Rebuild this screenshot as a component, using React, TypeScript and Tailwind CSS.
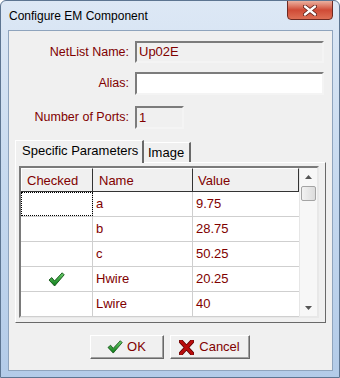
const rows = [
  { checked: false, name: "a", value: "9.75" },
  { checked: false, name: "b", value: "28.75" },
  { checked: false, name: "c", value: "50.25" },
  { checked: true, name: "Hwire", value: "20.25" },
  { checked: false, name: "Lwire", value: "40" },
];

const GreenCheck = ({ w = 17, h = 15 }: { w?: number; h?: number }) => (
  <svg width={w} height={h} viewBox="0 0 17 15">
    <defs>
      <linearGradient id="gck" x1="0" y1="0" x2="0" y2="1">
        <stop offset="0" stopColor="#6fd06f" />
        <stop offset="1" stopColor="#0a7a16" />
      </linearGradient>
    </defs>
    <polygon
      points="1,8 3.8,5.6 6.5,9 14.2,0.8 16.2,2.8 6.6,14"
      fill="url(#gck)"
      stroke="#0d4f12"
      strokeWidth="0.9"
      strokeLinejoin="round"
    />
  </svg>
);

const RedX = () => (
  <svg width="15" height="15" viewBox="0 0 15 15">
    <path d="M2 1.5 L13 13.5 M13 1.5 L2 13.5" stroke="#5a0000" strokeWidth="4.4" strokeLinecap="round" />
    <path d="M2 1.5 L13 13.5 M13 1.5 L2 13.5" stroke="#b80d0d" strokeWidth="3" strokeLinecap="round" />
  </svg>
);

const sunken =
  "border-2 border-t-[#7c7c7c] border-l-[#7c7c7c] border-b-[#f4f4f4] border-r-[#f4f4f4]";

const App = () => {
  return (
    <div className="w-[340px] h-[378px] overflow-hidden bg-gradient-to-b from-[#dde8f5] via-[#c6d9ef] to-[#b3cbe8] border border-[#5d7591] rounded-t-[6px] flex flex-col font-['Liberation_Sans',Arial,sans-serif] text-[13px]">
      {/* Title bar */}
      <div className="h-[29px] shrink-0 relative">
        <span className="absolute left-[8px] top-[7px] leading-[16px] text-[12px] text-black">
          Configure EM Component
        </span>
        <div className="absolute right-[6px] top-[-1px] w-[46px] h-[20px] rounded-b-[4px] border border-[#6e2a22] bg-gradient-to-b from-[#eab0a0] via-[#cf4a36] to-[#dd6f55] flex items-center justify-center">
          <svg width="14" height="11" viewBox="0 0 14 11">
            <path d="M2 1.5 L12 9.5 M12 1.5 L2 9.5" stroke="#5b1d17" strokeWidth="4" strokeLinecap="round" />
            <path d="M2 1.5 L12 9.5 M12 1.5 L2 9.5" stroke="#ffffff" strokeWidth="2.4" strokeLinecap="round" />
          </svg>
        </div>
      </div>

      {/* Client area */}
      <div className="ml-[7px] mr-[6px] mb-[6px] flex-1 bg-[#f0f0f0] border border-[#8fa4bd] flex flex-col text-[#800000]">
        {/* NetList Name */}
        <div className="flex items-center mt-[10px]">
          <label className="w-[120px] text-right text-[12.5px]">NetList Name:</label>
          <div className={`ml-[6px] w-[189px] h-[22px] bg-[#f0f0f0] ${sunken} px-[2px] leading-[18px]`}>
            Up02E
          </div>
        </div>

        {/* Alias */}
        <div className="flex items-center mt-[9px]">
          <label className="w-[120px] text-right text-[12.5px]">Alias:</label>
          <input
            className={`ml-[6px] w-[189px] h-[23px] bg-white ${sunken} px-[2px] outline-none`}
            type="text"
          />
        </div>

        {/* Number of Ports */}
        <div className="flex items-center mt-[11px]">
          <label className="w-[120px] text-right text-[12.5px]">Number of Ports:</label>
          <div className={`ml-[6px] w-[49px] h-[23px] bg-[#f0f0f0] ${sunken} px-[2px] leading-[19px]`}>
            1
          </div>
        </div>

        {/* Tabs */}
        <div className="flex items-end ml-[6px] mt-[10px] h-[23px] text-black">
          <div className="w-[129px] h-[23px] bg-[#f0f0f0] border-t border-l border-white border-r-[2px] border-r-[#696969] -mb-[1px] relative z-10 pl-[6px] leading-[20px]">
            Specific Parameters
          </div>
          <div className="w-[47px] h-[20px] bg-[#f0f0f0] border-t border-white border-r-[2px] border-r-[#696969] pl-[4px] leading-[20px]">
            Image
          </div>
        </div>

        {/* Tab panel */}
        <div className="ml-[6px] w-[311px] h-[161px] border border-t-white border-l-white border-r-[#696969] border-b-[#696969] pt-[3px] pl-[3px]">
          {/* Grid */}
          <div className="w-[300px] h-[152px] border-2 border-t-[#7a7a7a] border-l-[#7a7a7a] border-b-[#e8e8e8] border-r-[#e8e8e8] flex bg-white">
            <div className="w-[278px] flex flex-col">
              {/* Header */}
              <div className="flex h-[24px] bg-[#f0f0f0] border-b border-[#333333]">
                <div className="w-[72px] border-r border-[#333333] border-t border-l border-t-white border-l-white pl-[5px] leading-[23px]">
                  Checked
                </div>
                <div className="w-[100px] border-r border-[#333333] border-t border-t-white pl-[6px] leading-[23px]">
                  Name
                </div>
                <div className="w-[106px] border-r border-[#333333] border-t border-t-white pl-[5px] leading-[23px]">
                  Value
                </div>
              </div>
              {rows.map((r, i) => (
                <div key={r.name} className="flex h-[25px] border-b border-[#cfcfcf]">
                  <div
                    className={`w-[72px] border-r border-[#cfcfcf] flex items-center justify-center ${
                      i === 0 ? "outline outline-1 outline-dotted outline-black -outline-offset-1" : ""
                    }`}
                  >
                    {r.checked && <GreenCheck />}
                  </div>
                  <div className="w-[100px] border-r border-[#cfcfcf] pl-[3px] leading-[24px]">{r.name}</div>
                  <div className="w-[106px] pl-[3px] leading-[24px]">{r.value}</div>
                </div>
              ))}
            </div>

            {/* Scrollbar */}
            <div className="w-[18px] bg-[#f7f7f7] border-l border-[#e6e6e6] flex flex-col items-center">
              <div className="h-[17px] flex items-center justify-center">
                <svg width="7" height="4" viewBox="0 0 7 4">
                  <polygon points="0,4 3.5,0 7,4" fill="#555555" />
                </svg>
              </div>
              <div className="w-[15px] h-[15px] mt-[1px] rounded-[2px] border border-[#a4a4a4] bg-gradient-to-r from-[#f2f2f2] to-[#dcdcdc]" />
              <div className="flex-1" />
              <div className="h-[17px] flex items-center justify-center">
                <svg width="7" height="4" viewBox="0 0 7 4">
                  <polygon points="0,0 3.5,4 7,0" fill="#555555" />
                </svg>
              </div>
            </div>
          </div>
        </div>

        {/* Buttons */}
        <div className="flex justify-center gap-[6px] mt-[12px] ml-[-2px]">
          <button
            type="button"
            className="w-[74px] h-[24px] bg-[#f0f0f0] border border-t-white border-l-white border-r-[#696969] border-b-[#696969] shadow-[inset_-1px_-1px_0_#a0a0a0] flex items-center justify-center gap-[4px] text-[#800000]"
          >
            <GreenCheck w={16} h={14} />
            <span>OK</span>
          </button>
          <button
            type="button"
            className="w-[80px] h-[24px] bg-[#f0f0f0] border border-t-white border-l-white border-r-[#696969] border-b-[#696969] shadow-[inset_-1px_-1px_0_#a0a0a0] flex items-center justify-center gap-[5px] text-[#800000]"
          >
            <RedX />
            <span>Cancel</span>
          </button>
        </div>
      </div>
    </div>
  );
};

export default App;
